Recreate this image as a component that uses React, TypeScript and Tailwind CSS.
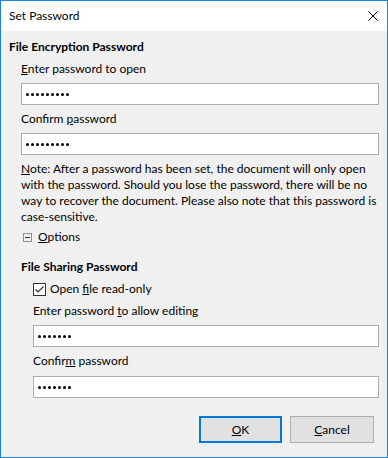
import React from "react";

const font = "font-['Lato','Noto_Sans',sans-serif]";

const Dots = ({ count }: { count: number }) => (
  <div className="flex items-center gap-[2px] pl-[4px]">
    {Array.from({ length: count }).map((_, i) => (
      <span key={i} className="block w-[3px] h-[3px] rounded-full bg-black" />
    ))}
  </div>
);

const PasswordBox = ({ count, mt }: { count: number; mt: string }) => (
  <div className={`${mt} h-[22px] bg-white border border-[#adadad] flex items-center`}>
    <Dots count={count} />
  </div>
);

export default function App() {
  return (
    <div
      className={`w-[388px] h-[458px] border border-[#1883d7] flex flex-col bg-[#f0f0f0] text-[12px] leading-4 text-black ${font}`}
    >
      {/* title bar */}
      <div className="h-[30px] bg-white flex items-center justify-between pl-[8px] pr-[9px]">
        <span>Set Password</span>
        <svg width="10" height="10" viewBox="0 0 10 10">
          <path d="M0.5 0.5 L9.5 9.5 M9.5 0.5 L0.5 9.5" stroke="#000" strokeWidth="1" />
        </svg>
      </div>

      <div className="flex-1 flex flex-col pl-[8px] pr-[8px] pt-[8px]">
        <div className="font-bold">File Encryption Password</div>

        <div className="ml-[12px] flex flex-col">
          <div className="mt-[6px]">
            <u>E</u>nter password to open
          </div>
          <PasswordBox count={9} mt="mt-[6px]" />
          <div className="mt-[6px]">
            Confirm <u>p</u>assword
          </div>
          <PasswordBox count={9} mt="mt-[6px]" />

          <div className="mt-[6px] whitespace-nowrap">
            <u>N</u>ote: After a password has been set, the document will only open
            <br />
            with the password. Should you lose the password, there will be no
            <br />
            way to recover the document. Please also note that this password is
            <br />
            case-sensitive.
          </div>

          <div className="mt-[4px] flex items-center">
            <svg width="9" height="9" viewBox="0 0 9 9" className="ml-[2px] mr-[6px]">
              <rect x="0.5" y="0.5" width="8" height="8" fill="none" stroke="#919191" />
              <path d="M2 4.5 H7" stroke="#333" strokeWidth="1" />
            </svg>
            <span>
              <u>O</u>ptions
            </span>
          </div>

          <div className="mt-[14px] font-bold">File Sharing Password</div>

          <div className="ml-[12px] flex flex-col">
            <div className="mt-[6px] flex items-center">
              <svg width="13" height="13" viewBox="0 0 13 13" className="mr-[4px]">
                <rect x="0.5" y="0.5" width="12" height="12" fill="#fff" stroke="#333" />
                <path d="M2.5 6.5 L5 9 L10.5 3.5" fill="none" stroke="#333" strokeWidth="1.2" />
              </svg>
              <span>
                Open <u>f</u>ile read-only
              </span>
            </div>
            <div className="mt-[6px]">
              Enter password <u>t</u>o allow editing
            </div>
            <PasswordBox count={7} mt="mt-[6px]" />
            <div className="mt-[6px]">
              Confir<u>m</u> password
            </div>
            <PasswordBox count={7} mt="mt-[7px]" />
          </div>
        </div>

        <div className="mt-[18px] mr-[5px] flex justify-end gap-[8px]">
          <button className="w-[83px] h-[27px] bg-[#e1e1e1] border-2 border-[#0078d7]">
            <u>O</u>K
          </button>
          <button className="w-[84px] h-[27px] bg-[#e1e1e1] border border-[#adadad]">
            <u>C</u>ancel
          </button>
        </div>
      </div>
    </div>
  );
}
